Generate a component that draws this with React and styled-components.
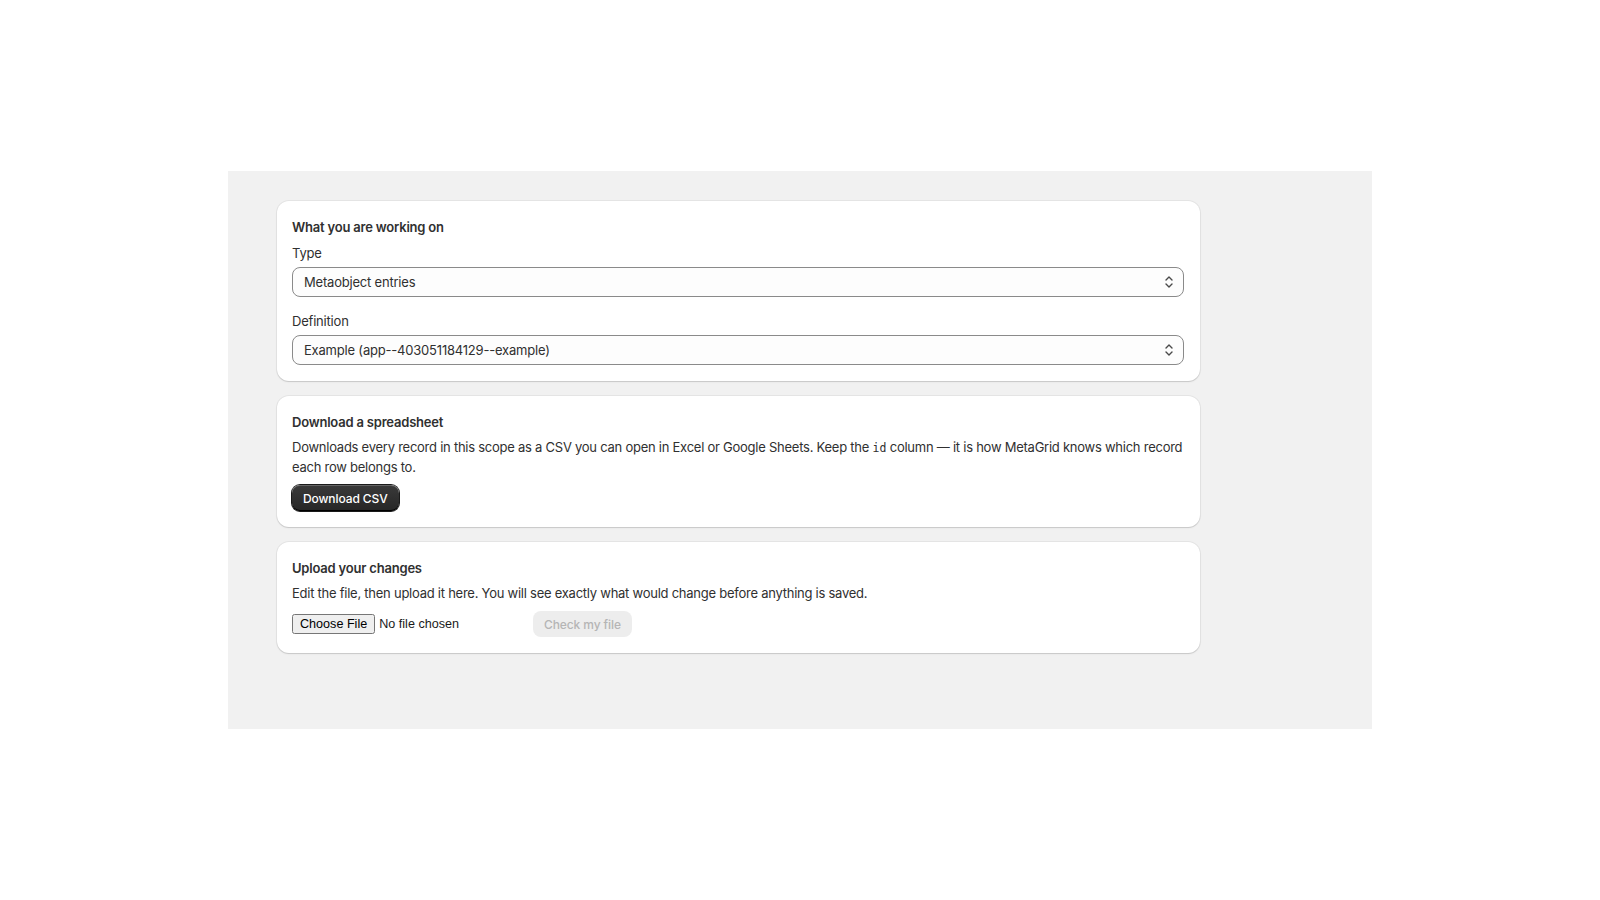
import styled, { createGlobalStyle } from 'styled-components'

const GlobalStyle = createGlobalStyle`
  html, body {
    margin: 0;
    padding: 0;
    background: #ffffff;
  }
  body {
    font-family: Inter, "Noto Sans", sans-serif;
    color: #303030;
    -webkit-font-smoothing: antialiased;
  }
`

const Screen = styled.div`
  min-height: 100vh;
  display: flex;
  align-items: center;
  justify-content: center;
`

const Frame = styled.div`
  width: 1144px;
  height: 558px;
  box-sizing: border-box;
  background: #f1f1f1;
  padding: 30px 172px 0 49px;
`

const Stack = styled.div`
  display: flex;
  flex-direction: column;
  gap: 15px;
`

const Card = styled.section`
  background: #ffffff;
  border-radius: 12px;
  box-shadow: 0 1px 0 rgba(26, 26, 26, 0.07), 0 0 0 1px rgba(26, 26, 26, 0.05), 0 1px 2px rgba(26, 26, 26, 0.08);
  padding: 16px 16px 16px 15px;
  display: flex;
  flex-direction: column;
  gap: 6px;
`

const Title = styled.h2`
  margin: 0;
  font-size: 13px;
  line-height: 20px;
  font-weight: 600;
  letter-spacing: -0.2px;
  color: #303030;
`

const Text = styled.p`
  margin: 0;
  font-size: 13px;
  line-height: 19px;
  font-weight: 400;
  letter-spacing: -0.25px;
  color: #303030;
`

const Code = styled.code`
  font-family: "DejaVu Sans Mono", "Liberation Mono", monospace;
  font-size: 11.5px;
  letter-spacing: 0;
`

const Field = styled.div`
  display: flex;
  flex-direction: column;
  gap: 4px;
  margin-top: ${(p) => (p.$spaced ? '8px' : '0')};
`

const Label = styled.label`
  font-size: 13px;
  line-height: 20px;
  font-weight: 400;
  letter-spacing: -0.2px;
`

const SelectBox = styled.div`
  position: relative;
  height: 30px;
  box-sizing: border-box;
  border: 1px solid #8a8a8a;
  border-radius: 8px;
  background: #fdfdfd;
  display: flex;
  align-items: center;
  padding: 0 30px 0 11px;
  font-size: 13px;
  font-weight: 400;
  letter-spacing: -0.2px;
  color: #303030;
`

const Chevrons = styled.svg`
  position: absolute;
  right: 9px;
  top: 50%;
  transform: translateY(-50%);
`

const Actions = styled.div`
  display: flex;
  align-items: center;
  gap: 8px;
  margin-top: 2px;
`

const PrimaryButton = styled.button`
  height: 26px;
  padding: 0 11px;
  border: none;
  border-radius: 8px;
  background: linear-gradient(180deg, #3a3a3a 0%, #262626 100%);
  box-shadow: inset 0 1px 0 rgba(255, 255, 255, 0.22), inset 0 -1px 0 #000, 0 0 0 1px #1a1a1a;
  color: #ffffff;
  font-family: Inter, sans-serif;
  font-size: 12px;
  font-weight: 500;
  letter-spacing: -0.1px;
  cursor: pointer;
`

const DisabledButton = styled.button`
  height: 26px;
  padding: 0 11px;
  border: none;
  border-radius: 8px;
  background: #ededed;
  color: #b5b5b5;
  font-family: Inter, sans-serif;
  font-size: 12px;
  font-weight: 500;
  letter-spacing: -0.1px;
`

const FileInput = styled.input`
  width: 233px;
  font-family: "Liberation Sans", Arial, sans-serif;
  font-size: 12.6px;
  color: #1a1a1a;
`

const SelectChevrons = () => (
  <Chevrons width="10" height="14" viewBox="0 0 10 14" fill="none" stroke="#4a4a4a" strokeWidth="1.4" strokeLinecap="round" strokeLinejoin="round">
    <path d="M2 5 L5 2 L8 5" />
    <path d="M2 9 L5 12 L8 9" />
  </Chevrons>
)

const App = () => (
  <>
    <GlobalStyle />
    <Screen>
      <Frame>
        <Stack>
          <Card>
            <Title>What you are working on</Title>
            <Field>
              <Label>Type</Label>
              <SelectBox>
                Metaobject entries
                <SelectChevrons />
              </SelectBox>
            </Field>
            <Field $spaced>
              <Label>Definition</Label>
              <SelectBox>
                Example (app--403051184129--example)
                <SelectChevrons />
              </SelectBox>
            </Field>
          </Card>

          <Card>
            <Title>Download a spreadsheet</Title>
            <Text>
              Downloads every record in this scope as a CSV you can open in Excel or Google Sheets. Keep the <Code>id</Code> column — it is how MetaGrid knows which record each row belongs to.
            </Text>
            <Actions>
              <PrimaryButton>Download CSV</PrimaryButton>
            </Actions>
          </Card>

          <Card>
            <Title>Upload your changes</Title>
            <Text>Edit the file, then upload it here. You will see exactly what would change before anything is saved.</Text>
            <Actions>
              <FileInput type="file" accept=".csv" />
              <DisabledButton disabled>Check my file</DisabledButton>
            </Actions>
          </Card>
        </Stack>
      </Frame>
    </Screen>
  </>
)

export default App
